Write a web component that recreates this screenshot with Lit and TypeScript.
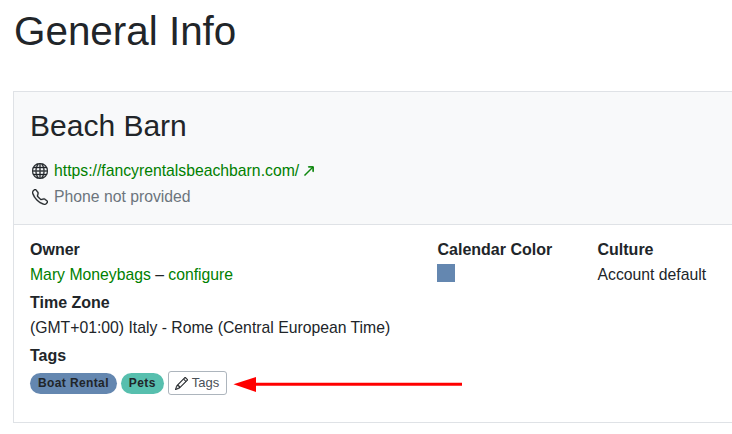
import { LitElement, html, css } from "lit";
import { customElement } from "lit/decorators.js";

@customElement("app-root")
export class AppRoot extends LitElement {
  static styles = css`
    :host {
      display: block;
      position: relative;
      width: 732px;
      height: 434px;
      overflow: hidden;
      background: #fff;
      font-family: "Liberation Sans", Arial, sans-serif;
      font-size: 16px;
      line-height: 24px;
      color: #212529;
    }
    .page { padding: 7px 0 0 13px; display: flex; flex-direction: column; }
    h1 { margin: 0 0 36px 1px; font-size: 40.4px; line-height: 48px; font-weight: 400; }
    .card { width: 900px; border: 1px solid #dfe2e6; box-sizing: border-box; height: 332px; }
    .head { background: #f8f9fa; border-bottom: 1px solid #dfe2e6; padding: 16px 16px 14px; height: 133px; box-sizing: border-box; }
    h2 { margin: 0 0 14px; font-size: 30px; line-height: 36px; font-weight: 400; }
    .line { display: flex; align-items: center; height: 26px; font-size: 15.75px; }
    .icon { width: 16px; height: 16px; flex: none; margin: 0 6px 0 2px; fill: #212529; stroke: #212529; stroke-width: 0.35; }
    a { color: #008000; text-decoration: none; }
    .muted { color: #6c757d; }
    .ext { width: 12px; height: 12px; margin-left: 4px; fill: #008000; stroke: #008000; stroke-width: 1; }
    .body { padding: 13px 16px 12px; display: grid; grid-template-columns: 407.5px 160px 1fr; }
    .field { display: flex; flex-direction: column; gap: 1px; margin-bottom: 4px; }
    .wide { grid-column: 1 / -1; }
    .label { font-weight: 700; }
    .val { font-size: 15.75px; }
    .swatch { width: 18px; height: 18px; background: #6487b0; margin-top: 1px; margin-left: -0.5px; }
    .tags { display: flex; align-items: center; gap: 4px; height: 26px; margin-top: 1px; }
    .tag { font-size: 12px; font-weight: 700; line-height: 21px; height: 21px; padding: 0 8px; border-radius: 11px; letter-spacing: 0.38px; }
    .blue { background: #6487b0; }
    .green { background: #57bfae; }
    .btn { display: flex; align-items: center; gap: 4px; box-sizing: border-box; width: 59px; height: 24px; padding: 0 6px; border: 1px solid #adb5bd; border-radius: 3px; background: #fff; color: #495057; font-size: 13px; }
    .btn svg { width: 13px; height: 13px; fill: #212529; stroke: #212529; stroke-width: 0.4; }
    .arrow { position: absolute; left: 233px; top: 375px; }
  `;

  render() {
    return html`
      <div class="page">
        <h1>General Info</h1>
        <div class="card">
          <div class="head">
            <h2>Beach Barn</h2>
            <div class="line">
              <svg class="icon" viewBox="0 0 16 16">
                <path d="M0 8a8 8 0 1 1 16 0A8 8 0 0 1 0 8zm7.500-6.923c-.67.204-1.335.82-1.887 1.855A7.970 7.970 0 0 0 5.145 4H7.500V1.077zM4.090 4a9.267 9.267 0 0 1 .64-1.539 6.700 6.700 0 0 1 .597-.933A7.025 7.025 0 0 0 2.255 4H4.090zm-.582 3.500c.03-.877.138-1.718.312-2.500H1.674a6.958 6.958 0 0 0-.656 2.500h2.490zM4.847 5a12.500 12.500 0 0 0-.338 2.500H7.500V5H4.847zM8.500 5v2.500h2.990a12.495 12.495 0 0 0-.337-2.500H8.500zM4.510 8.500a12.500 12.500 0 0 0 .337 2.500H7.500V8.500H4.510zm3.990 0V11h2.653c.187-.765.306-1.608.338-2.500H8.500zM5.145 12c.138.386.295.744.468 1.068.552 1.035 1.218 1.650 1.887 1.855V12H5.145zm.182 2.472a6.696 6.696 0 0 1-.597-.933A9.268 9.268 0 0 1 4.090 12H2.255a7.024 7.024 0 0 0 3.072 2.472zM3.820 11a13.652 13.652 0 0 1-.312-2.500h-2.490c.062.89.291 1.733.656 2.500H3.820zm6.853 3.472A7.024 7.024 0 0 0 13.745 12H11.910a9.270 9.270 0 0 1-.64 1.539 6.688 6.688 0 0 1-.597.933zM8.500 12v2.923c.67-.204 1.335-.82 1.887-1.855.173-.324.33-.682.468-1.068H8.500zm3.680-1h2.146c.365-.767.594-1.610.656-2.500h-2.490a13.650 13.650 0 0 1-.312 2.500zm2.802-3.500a6.959 6.959 0 0 0-.656-2.500H12.180c.174.782.282 1.623.312 2.500h2.490zM11.270 2.461c.247.464.462.98.64 1.539h1.835a7.024 7.024 0 0 0-3.072-2.472c.218.284.418.598.597.933zM10.855 4a7.966 7.966 0 0 0-.468-1.068C9.835 1.897 9.170 1.282 8.500 1.077V4h2.355z"/>
              </svg>
              <a href="#">https://fancyrentalsbeachbarn.com/</a>
              <svg class="ext" viewBox="0 0 16 16">
                <path d="M14 2.500a.5.5 0 0 0-.5-.5h-6a.5.5 0 0 0 0 1h4.793L2.146 13.146a.5.5 0 0 0 .708.708L13 3.707V8.500a.5.5 0 0 0 1 0v-6z"/>
              </svg>
            </div>
            <div class="line">
              <svg class="icon" viewBox="0 0 16 16">
                <path d="M3.654 1.328a.678.678 0 0 0-1.015-.063L1.605 2.300c-.483.484-.661 1.169-.45 1.770a17.568 17.568 0 0 0 4.168 6.608 17.569 17.569 0 0 0 6.608 4.168c.601.211 1.286.033 1.770-.45l1.034-1.034a.678.678 0 0 0-.063-1.015l-2.307-1.794a.678.678 0 0 0-.58-.122l-2.190.547a1.745 1.745 0 0 1-1.657-.459L5.482 8.062a1.745 1.745 0 0 1-.46-1.657l.548-2.190a.678.678 0 0 0-.122-.58L3.654 1.328zM1.884.511a1.745 1.745 0 0 1 2.612.163L6.290 2.980c.329.423.445.974.315 1.494l-.547 2.190a.678.678 0 0 0 .178.643l2.457 2.457a.678.678 0 0 0 .644.178l2.189-.547a1.745 1.745 0 0 1 1.494.315l2.306 1.794c.829.645.905 1.870.163 2.611l-1.034 1.034c-.74.74-1.846 1.065-2.877.702a18.634 18.634 0 0 1-7.010-4.420 18.634 18.634 0 0 1-4.420-7.009c-.362-1.030-.037-2.137.703-2.877L1.885.511z"/>
              </svg>
              <span class="muted">Phone not provided</span>
            </div>
          </div>
          <div class="body">
            <div class="field">
              <span class="label">Owner</span>
              <span class="val"><a href="#">Mary Moneybags</a> – <a href="#">configure</a></span>
            </div>
            <div class="field">
              <span class="label">Calendar Color</span>
              <div class="swatch"></div>
            </div>
            <div class="field">
              <span class="label">Culture</span>
              <span class="val">Account default</span>
            </div>
            <div class="field wide">
              <span class="label">Time Zone</span>
              <span class="val">(GMT+01:00) Italy - Rome (Central European Time)</span>
            </div>
            <div class="field wide">
              <span class="label">Tags</span>
              <div class="tags">
                <span class="tag blue">Boat Rental</span>
                <span class="tag green">Pets</span>
                <span class="btn">
                  <svg viewBox="0 0 16 16">
                    <path d="M12.146.146a.5.5 0 0 1 .708 0l3 3a.5.5 0 0 1 0 .708l-10 10a.5.5 0 0 1-.168.11l-5 2a.5.5 0 0 1-.65-.65l2-5a.5.5 0 0 1 .11-.168l10-10zM11.207 2.500 13.500 4.793 14.793 3.500 12.500 1.207 11.207 2.500zm1.586 3L10.500 3.207 4 9.707V10h.5a.5.5 0 0 1 .5.5v.5h.5a.5.5 0 0 1 .5.5v.5h.293l6.500-6.500zm-9.761 5.175-.106.106-1.528 3.821 3.821-1.528.106-.106A.5.5 0 0 1 5 12.500V12h-.5a.5.5 0 0 1-.5-.5V11h-.5a.5.5 0 0 1-.468-.325z"/>
                  </svg>
                  Tags
                </span>
              </div>
            </div>
          </div>
        </div>
      </div>
      <svg class="arrow" width="232" height="18" viewBox="0 0 232 18">
        <path d="M229 9.300H22" stroke="#f00" stroke-width="3"/>
        <path d="M0.500 9.300 23 2V17Z" fill="#f00"/>
      </svg>
    `;
  }
}
